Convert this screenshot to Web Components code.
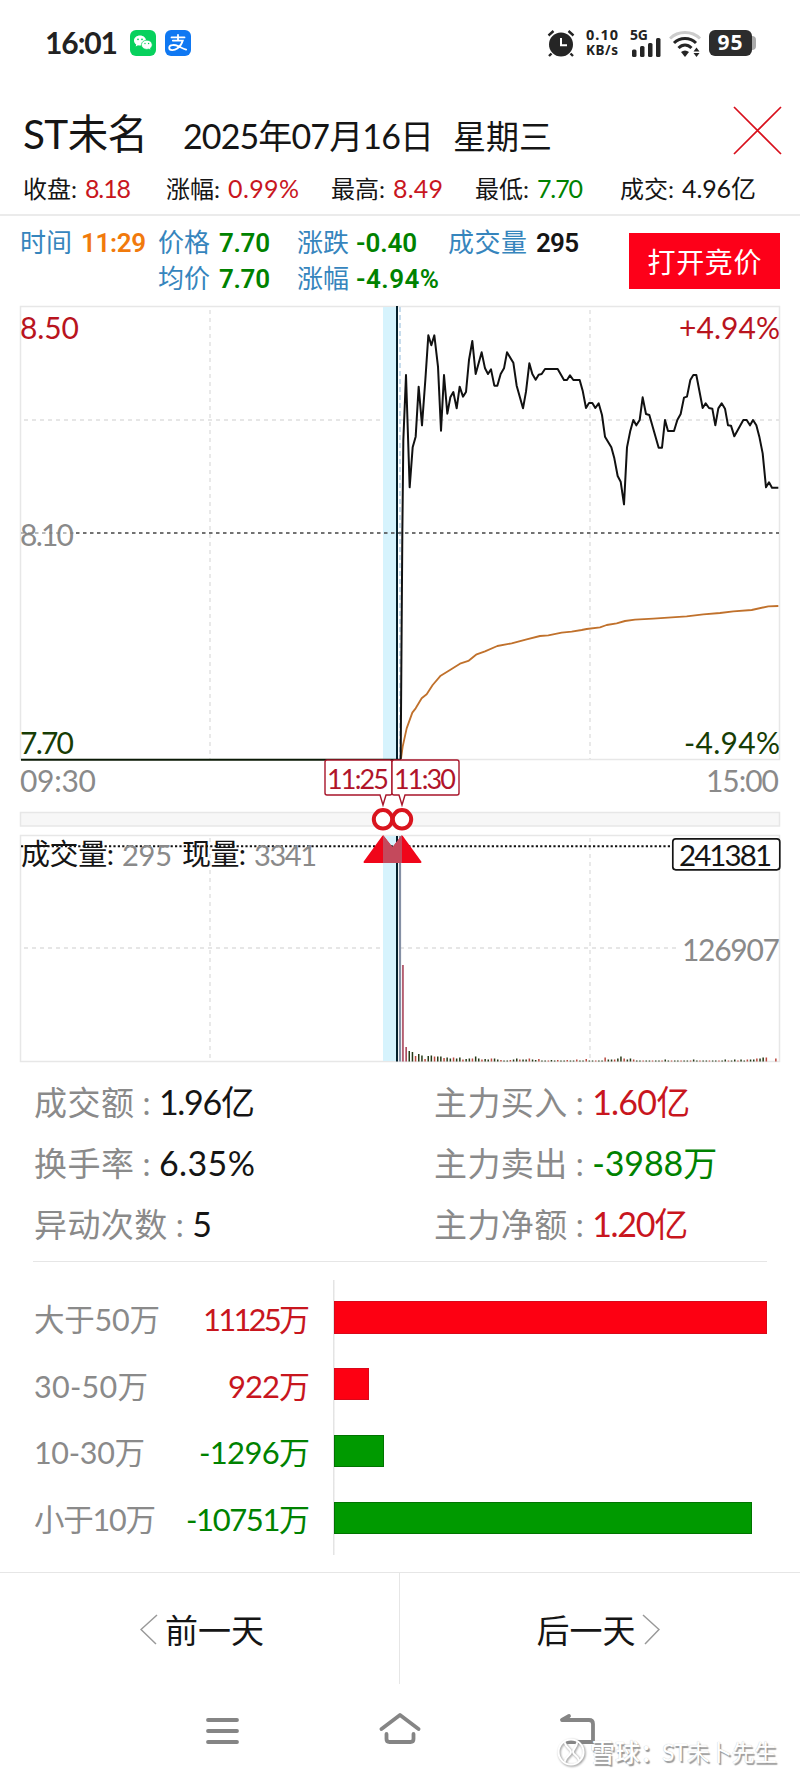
<!DOCTYPE html>
<html lang="zh-CN">
<head>
<meta charset="utf-8">
<meta name="viewport" content="width=800">
<title>ST未名</title>
<style>
  html, body { margin: 0; background: #fff; }
  body {
    width: 800px; height: 1778px; overflow: hidden; color: #151515;
    font-family: Lato, "Noto Sans CJK SC", sans-serif;
    --red: #c8161e; --green: #008200; --grey: #8a8a8a; --line: #e6e6e6;
  }
</style>
</head>
<body>
<stock-app></stock-app>
<script>
const define = (name, html, ready) => customElements.define(name, class extends HTMLElement {
  constructor() {
    super();
    this.attachShadow({ mode: "open" });
  }
  connectedCallback() {
    this.shadowRoot.innerHTML = typeof html === "function" ? html(this) : html;
    if (ready) ready(this);
  }
});

// text run tracked out to an exact width: <fit-text w="127" s="37">
define("fit-text", el => `
  <style>
    :host { display: block; flex: none; line-height: 1; width: ${el.getAttribute("w")}px; font-size: ${el.getAttribute("s")}px; }
    span { display: block; width: max-content; white-space: pre; }
  </style><span><slot></slot></span>`, el => {
  const span = el.shadowRoot.querySelector("span");
  const n = [...el.textContent].length - 1;
  if (n > 0) span.style.letterSpacing = (el.getAttribute("w") - span.getBoundingClientRect().width) / n + "px";
});

define("status-bar", `
  <style>
    :host { display: flex; height: 80px; box-sizing: border-box; padding: 30px 44px 0 45px; align-items: flex-start; color: #222; font-weight: 700; }
    svg { display: block; flex: none; }
    .space { flex: 1; }
    .speed { margin: -3px 12px 0 11px; display: grid; gap: 2px; font-family: "Noto Sans", sans-serif; }
    .speed fit-text { line-height: 14px; }
    .cell { margin-right: 7px; display: grid; }
    .battery { display: flex; align-items: center; }
    .body { width: 43px; height: 26px; border-radius: 6px; background: #2c2c2c; color: #fff; display: grid; place-content: center; box-sizing: border-box; padding-right: 1px; }
    .tip { width: 4px; height: 14px; border-radius: 0 4px 4px 0; background: #aaa; }
  </style>
  <fit-text w="73" s="30" style="margin-top:-3px">16:01</fit-text>
  <svg width="26" height="26" viewBox="0 0 26 26" style="margin-left:12px">
    <rect width="26" height="26" rx="6" fill="#07d15d"/>
    <path d="M10 5.5c-3.4 0-6 2.200-6 5 0 1.600.8 3 2.200 3.900L5.700 16.500l2.300-1.200c3 .8 8-.7 8-4.800 0-2.800-2.600-5-6-5z" fill="#fff"/>
    <path d="M16.800 10.200c-3 0-5.400 2-5.400 4.600s2.400 4.600 5.400 4.600c.7 0 1.400-.1 2-.3l2 1-.5-1.800c1.200-.8 1.900-2 1.900-3.500 0-2.600-2.400-4.600-5.400-4.600z" fill="#fff" stroke="#07d15d" stroke-width=".7"/>
    <g fill="#07d15d"><circle cx="8" cy="9.300" r=".9"/><circle cx="12" cy="9.300" r=".9"/><circle cx="15" cy="13.500" r=".7"/><circle cx="18.600" cy="13.500" r=".7"/></g>
  </svg>
  <svg width="26" height="26" viewBox="0 0 26 26" style="margin-left:9px">
    <rect width="26" height="26" rx="6" fill="#0f78f2"/>
    <g fill="none" stroke="#fff" stroke-width="1.800" stroke-linecap="round">
      <path d="M13 4.800v5.400M6.500 7.400h13M7.800 10.600h10c-.8 3-2.800 6-5.600 8-2.800 2-8 2.400-8-.9 0-3.400 5.600-3.200 9-1.600 3 1.400 5 2.600 8 3.500"/>
    </g>
  </svg>
  <div class="space"></div>
  <svg width="28" height="28" viewBox="0 0 28 28">
    <circle cx="14" cy="14.500" r="12" fill="#252525"/>
    <path d="M14 8v7.200h6" fill="none" stroke="#fff" stroke-width="2"/>
    <path d="M1.500 5.500l5-4.500M21.500 1l5 4.500M4.500 23.500L2 26M23.500 23.500L26 26" stroke="#252525" stroke-width="2.400"/>
  </svg>
  <div class="speed"><fit-text w="32" s="14.500">0.10</fit-text><fit-text w="32" s="13.500">KB/s</fit-text></div>
  <div class="cell">
    <fit-text w="18" s="14" style="font-family:'Noto Sans',sans-serif;height:10px;margin-top:-2px">5G</fit-text>
    <svg width="32" height="19" viewBox="0 0 32 19" fill="#252525">
      <rect x="2" y="11.500" width="4.500" height="7.500" rx="1.500"/><rect x="10" y="8" width="4.500" height="11" rx="1.500"/><rect x="18" y="5" width="4.500" height="14" rx="1.500"/><rect x="26" y="0" width="4.500" height="19" rx="1.500"/>
    </svg>
  </div>
  <svg width="33" height="28" viewBox="0 0 33 28" fill="none" stroke-width="3">
    <path d="M1 8.500C9 .5 23 .5 31 8.500" stroke="#ccc"/>
    <path d="M5 13c6-6 16-6 22 0M9.500 18c4-4 9-4 13 0" stroke="#252525"/>
    <path d="M12 22c2.500-2 5.500-2 8 0l-4 5z" fill="#252525"/>
    <path d="M24.500 21.500l3-4 3 4zM24.500 23l3 4 3-4z" fill="#252525"/>
  </svg>
  <div class="battery" style="margin-left:7px"><div class="body"><fit-text w="25" s="21" style="font-family:'Noto Sans',sans-serif;margin-top:-1px">95</fit-text></div><div class="tip"></div></div>
`);

define("stock-header", `
  <style>
    :host { display: block; height: 136px; box-sizing: border-box; border-bottom: 2px solid #ebebeb; padding: 27px 18px 0 23px; }
    .title, .quotes { display: flex; align-items: baseline; }
    .title { height: 69px; padding-top: 7px; box-sizing: border-box; }
    svg { align-self: flex-start; margin: -8px 0 0 auto; }
    .quotes fit-text:nth-child(even) { margin-left: 8px; }
    .up { color: var(--red); } .down { color: var(--green); }
  </style>
  <div class="title">
    <fit-text w="125" s="40.500">ST未名</fit-text>
    <fit-text w="251" s="34" style="margin-left:35px">2025年07月16日</fit-text>
    <fit-text w="99" s="33" style="margin-left:19px">星期三</fit-text>
    <svg width="49" height="49" viewBox="0 0 49 49" stroke="#d8101c" stroke-width="1.700"><path d="M1 1l47 47M48 1L1 48"/></svg>
  </div>
  <div class="quotes">
    <fit-text w="54" s="24">收盘:</fit-text><fit-text class="up" w="46" s="25">8.18</fit-text>
    <fit-text w="54" s="24" style="margin-left:35px">涨幅:</fit-text><fit-text class="up" w="71" s="25">0.99%</fit-text>
    <fit-text w="54" s="24" style="margin-left:32px">最高:</fit-text><fit-text class="up" w="50" s="25">8.49</fit-text>
    <fit-text w="54" s="24" style="margin-left:32px">最低:</fit-text><fit-text class="down" w="46" s="25">7.70</fit-text>
    <fit-text w="54" s="24" style="margin-left:37px">成交:</fit-text><fit-text w="74" s="25">4.96亿</fit-text>
  </div>
`);

define("cursor-info", `
  <style>
    :host { display: flex; height: 84px; padding: 13px 20px 0 20px; box-sizing: border-box; justify-content: space-between; }
    .grid { display: grid; grid-template-columns: 138px 139px 151px auto; grid-auto-rows: 35.5px; }
    .cell { display: flex; align-items: baseline; gap: 9px; color: #3685bd; }
    b { font: 600 26px Roboto, sans-serif; color: var(--green); display: block; }
    button { all: unset; width: 151px; height: 56px; margin-top: 4px; padding-top: 1px; box-sizing: border-box; background: #fd0019; color: #fff; display: grid; place-content: center; }
  </style>
  <div class="grid">
    <div class="cell"><fit-text w="52" s="26">时间</fit-text><b style="color:#f17a0c"><fit-text w="65" s="26">11:29</fit-text></b></div>
    <div class="cell"><fit-text w="52" s="26">价格</fit-text><b><fit-text w="51" s="26">7.70</fit-text></b></div>
    <div class="cell" style="gap:7px"><fit-text w="52" s="26">涨跌</fit-text><b><fit-text w="61" s="26">-0.40</fit-text></b></div>
    <div class="cell"><fit-text w="79" s="26">成交量</fit-text><b style="color:#151515"><fit-text w="43" s="26">295</fit-text></b></div>
    <div class="cell" style="grid-column:2"><fit-text w="52" s="26">均价</fit-text><b><fit-text w="51" s="26">7.70</fit-text></b></div>
    <div class="cell" style="gap:7px"><fit-text w="52" s="26">涨幅</fit-text><b><fit-text w="83" s="26">-4.94%</fit-text></b></div>
  </div>
  <button><fit-text w="114" s="28">打开竞价</fit-text></button>
`);

// intraday points, in thirds of a pixel from (370, 300)
const PRICE = "92,1378 97,700 100,420 108,225 119,562 128,442 137,410 146,260 156,376 166,240 175,106 184,136 193,106 204,200 213,392 222,225 232,341 241,292 250,276 260,325 269,260 279,290 288,276 297,180 307,123 317,222 335,157 345,205 354,222 363,208 373,257 382,257 392,222 402,205 411,157 430,188 440,257 459,325 468,275 478,190 487,222 497,239 506,224 515,222 525,207 563,207 582,240 591,240 600,226 610,240 629,240 638,272 648,324 657,309 667,309 676,324 686,310 696,345 705,410 714,425 724,442 733,475 743,528 752,545 762,613 771,442 781,392 790,360 799,376 809,360 818,292 828,342 838,345 866,443 876,443 885,360 894,393 912,393 922,360 932,342 942,293 951,290 961,240 970,225 979,225 998,324 1007,310 1017,324 1027,326 1036,376 1045,325 1055,310 1065,326 1074,376 1083,377 1093,409 1120,360 1130,360 1140,376 1149,360 1159,376 1168,410 1178,460 1188,562 1197,547 1206,563 1225,563";
const AVERAGE = "93,1376 98,1340 110,1285 127,1238 137,1225 155,1195 170,1183 188,1155 212,1127 240,1110 270,1091 295,1083 320,1063 345,1054 382,1038 425,1030 470,1018 510,1008 535,1006 575,998 605,995 635,990 650,987 690,982 710,975 740,970 765,963 795,959 850,956 905,952 950,949 1000,943 1050,939 1090,934 1145,930 1195,919 1225,918";
// per-minute volume heights after the reopening
const VOLUME = [96.5, 14.5, 10.5, 9.5, 5.5, 7.5, 6, 2.5, 5.5, 6, 5, 5, 5, 3.5, 4, 3, 4, 3, 4, 2, 2.5, 3, 3, 5, 3, 2, 2.5, 2, 3, 3, 2, 1.5, 1, 1, 1.5, 2, 3, 2, 2, 2, 3, 2, 1.5, 2.5, 1, 1, 1, 1.5, 1, 1.5, 1, 1, 1.5, 1, 1, 2, 1, 1, 2.5, 1, 1, 1, 1, 1, 4, 2, 2, 2, 3, 5, 3, 2, 3, 2, 1, 1, 1, 1, 1, 1, 1, 1, 1, 2, 1, 1, 1, 1, 1, 1, 1, 1, 2, 1, 1, 1, 1, 1, 1, 1, 1, 1, 2, 1, 1, 2, 1, 2, 1, 2, 2, 2, 3, 3, 4, 4, 0, 0, 3];
const volumeBars = () => VOLUME.map((h, i) =>
  `<rect x="${(402.2 + i * 3.16).toFixed(1)}" y="${1061.5 - h}" width="1.500" height="${h}" fill="${i < 2 ? "#a33a50" : i % 3 === 1 || i === 4 ? "#b9483e" : "#263a16"}"/>`).join("");
const text = (x, y, w, s, fill, str) =>
  `<text x="${x}" y="${y}" font-size="${s}" fill="${fill}" textLength="${w}">${str}</text>`;

define("minute-chart", () => `
  <style>
    :host { display: block; height: 770px; }
    svg { display: block; }
  </style>
  <svg width="800" height="770" viewBox="0 300 800 770">
    <g fill="none" stroke="#e7e7e7" stroke-width="1.500">
      <rect x="20.500" y="306.500" width="759" height="453"/>
      <rect x="20.500" y="812.500" width="759" height="13.500" fill="#f7f7f7"/>
      <rect x="20.500" y="835.500" width="759" height="226"/>
    </g>
    <g stroke="#dedede" stroke-width="1.300" stroke-dasharray="4 4">
      <path d="M210 310v449M590 310v449M210 838v223M590 838v223M24 420h755M24 948h655"/>
    </g>
    <path d="M383 307h14v453h-14zM383 836h14v225h-14z" fill="#d6f3fd"/>
    <path d="M400 307v453" stroke="#c7dcec" stroke-width="2" stroke-dasharray="5 3"/>
    <path d="M76 533h703" stroke="#444" stroke-width="1.500" stroke-dasharray="3.500 3.500"/>
    ${text(20, 338.5, 59, 30, "#b9141e", "8.50")}
    ${text(679, 338.5, 101, 30, "#b9141e", "+4.94%")}
    ${text(20, 545.5, 54, 30, "#8a8a8a", "8.10")}
    <path d="M21 533h55" stroke="#777" stroke-width="1.200" stroke-dasharray="3.500 3.500"/>
    ${text(20, 753.5, 54, 30, "#173d05", "7.70")}
    ${text(684, 753.5, 96, 30, "#173d05", "-4.94%")}
    ${text(20, 791.5, 76, 30, "#8a8a8a", "09:30")}
    ${text(706, 791.5, 73, 30, "#8a8a8a", "15:00")}
    <g transform="translate(370 300) scale(.33333)" fill="none" stroke-linejoin="round">
      <polyline points="${AVERAGE}" stroke="#c0712c" stroke-width="5.500"/>
      <polyline points="${PRICE}" stroke="#111" stroke-width="6"/>
    </g>
    <path d="M21 759.800h380" stroke="#0b1a06" stroke-width="2"/>
    <path d="M397 306v454M397 836v225.500" stroke="#04202c" stroke-width="2"/>
    <path d="M400 836v225.500" stroke="#8590a5" stroke-width="2.200"/>
    <path d="M21 846.200h650" stroke="#111" stroke-width="2" stroke-dasharray="2.200 2.200"/>
    ${volumeBars()}
    ${text(21, 865, 93, 29, "#151515", "成交量:")}
    ${text(122, 865.5, 50, 29, "#8a8a8a", "295")}
    ${text(182, 865, 64, 29, "#151515", "现量:")}
    ${text(254, 865.5, 63, 29, "#8a8a8a", "3341")}
    <g stroke="#a8152a" stroke-width="1.400" fill="#fff">
      <path d="M327 760h63q2 0 2 2v31q0 2-2 2h-4l-3 10-3-10h-53q-2 0-2-2v-31q0-2 2-2z"/>
      <path d="M394 760h63q2 0 2 2v31q0 2-2 2h-52l-3 10-3-10h-5q-2 0-2-2v-31q0-2 2-2z"/>
    </g>
    ${text(327, 788.5, 62, 27, "#b0142a", "11:25")}
    ${text(394, 788.5, 62, 27, "#b0142a", "11:30")}
    <g fill="#fff" stroke="#d9141e" stroke-width="4"><circle cx="383" cy="819.300" r="9.200"/><circle cx="402" cy="819.300" r="9.200"/></g>
    <g fill="#f0061a" stroke="#f0061a" stroke-width="2" stroke-linejoin="round"><path d="M383 836.500l19.500 25.500h-38zM402 836.500l-19.500 25.500h38z"/></g>
    <path d="M383 835l9.500 12 9.500-12v28h-19z" fill="#c4495c"/>
    <rect x="672.800" y="838.800" width="107" height="31" rx="3" fill="#fff" stroke="#151515" stroke-width="1.700"/>
    ${text(679, 866, 93, 29.5, "#151515", "241381")}
    ${text(682, 960.5, 98, 30, "#8a8a8a", "126907")}
  </svg>
`);

define("stat-item", el => `
  <style>
    :host { display: flex; align-items: baseline; height: 60.800px; }
    fit-text:first-of-type { color: var(--grey); }
    .colon { color: var(--grey); width: 25px; text-align: center; font-size: 32px; line-height: 1; }
    .val { color: var(--${el.getAttribute("tone") || "ink"}); }
  </style>
  <fit-text w="${33.3 * el.getAttribute("label").length}" s="33">${el.getAttribute("label")}</fit-text>
  <span class="colon">:</span>
  <fit-text class="val" w="${el.getAttribute("w")}" s="34">${el.getAttribute("value")}</fit-text>
`);

define("trade-stats", `
  <style>
    :host { display: grid; grid-template-columns: 400px auto; grid-auto-rows: 60.800px; height: 192px; margin: 0 33px; padding: 15px 0 0 1px; box-sizing: border-box; border-bottom: 1.500px solid var(--line); --ink: #151515; }
  </style>
  <stat-item label="成交额" value="1.96亿" w="96"></stat-item>
  <stat-item label="主力买入" value="1.60亿" w="98" tone="red"></stat-item>
  <stat-item label="换手率" value="6.35%" w="96"></stat-item>
  <stat-item label="主力卖出" value="-3988万" w="125" tone="green"></stat-item>
  <stat-item label="异动次数" value="5" w="20"></stat-item>
  <stat-item label="主力净额" value="1.20亿" w="96" tone="red"></stat-item>
`);

define("flow-row", el => `
  <style>
    :host { display: grid; grid-template-columns: 300px auto; height: 66.800px; align-items: center; color: var(--${el.getAttribute("tone")}); }
    .names { display: flex; justify-content: space-between; padding-right: 24px; margin-top: 4px; }
    .names fit-text:first-child { color: var(--grey); }
    .bar { height: 32.500px; width: ${el.getAttribute("bar")}px; box-sizing: border-box; }
    .red { background: #fd0012; border: 1px solid #d9081a; } .green { background: #009a00; border: 1px solid #007400; }
  </style>
  <div class="names"><fit-text w="${el.getAttribute("lw")}" s="30.500">${el.getAttribute("label")}</fit-text><fit-text w="${el.getAttribute("vw")}" s="31">${el.getAttribute("value")}</fit-text></div>
  <div class="bar ${el.getAttribute("tone")}"></div>
`);

define("flow-chart", `
  <style>
    :host { display: block; height: 310px; box-sizing: border-box; padding: 18px 0 0 34px; }
    .axis { height: 275px; box-sizing: border-box; padding-top: 4px; background: linear-gradient(#e4e4e4, #e4e4e4) 299px 0 / 1.500px 100% no-repeat; }
  </style>
  <div class="axis">
    <flow-row label="大于50万" lw="126" value="11125万" vw="107" bar="433" tone="red"></flow-row>
    <flow-row label="30-50万" lw="114" value="922万" vw="82" bar="35" tone="red"></flow-row>
    <flow-row label="10-30万" lw="111" value="-1296万" vw="111" bar="50" tone="green"></flow-row>
    <flow-row label="小于10万" lw="122" value="-10751万" vw="124" bar="418" tone="green"></flow-row>
  </div>
`);

define("day-pager", `
  <style>
    :host { display: grid; grid-template-columns: 1fr 1fr; height: 112px; border-top: 1.500px solid var(--line); box-sizing: border-box; }
    div { display: flex; align-items: center; justify-content: center; gap: 7px; }
    div:first-of-type { border-right: 1.500px solid var(--line); padding-left: 5px; }
    div:last-of-type { padding-right: 4px; gap: 6px; }
    fit-text { margin-top: 3px; }
    svg { margin-top: 1px; }
  </style>
  <div><svg width="18" height="31" fill="none" stroke="#999" stroke-width="1.500"><path d="M17 1L1 15.500 16 30"/></svg><fit-text w="99" s="33">前一天</fit-text></div>
  <div><fit-text w="99" s="33">后一天</fit-text><svg width="18" height="31" fill="none" stroke="#999" stroke-width="1.500"><path d="M1 1l16 14.500L3 30"/></svg></div>
`);

define("system-nav", `
  <style>
    :host { display: flex; height: 94px; padding: 28px 204px 0; box-sizing: border-box; justify-content: space-between; align-items: flex-start; }
    svg { fill: none; stroke: #858585; stroke-width: 3.800; stroke-linecap: round; stroke-linejoin: round; }
    .mark { position: absolute; left: 557px; top: 1737px; display: flex; align-items: center; color: #fff; text-shadow: 1.500px 1.500px 1px #999, 0 0 1px #bbb; }
    .mark svg { stroke: #fff; stroke-width: 2; filter: drop-shadow(1px 1px .8px #888); }
  </style>
  <svg width="37" height="36"><path d="M4 8h29M4 19h29M4 30h29"/></svg>
  <svg width="42" height="36"><path d="M2.500 17L21 3l18.500 14M7.500 22v5q0 3 3 3h21q3 0 3-3v-5"/></svg>
  <svg width="37" height="36"><path d="M10 4L3 8h27q4 0 4 4v18H8"/></svg>
  <div class="mark">
    <svg width="30" height="30"><circle cx="14" cy="15" r="12.500"/><path d="M8 6c1 5 6 6 6 9s-5 4-6 9M20 6c-1 5-4 6-4 9s5 4 6 8"/></svg>
    <fit-text w="75" s="25" style="margin-left:3px;font-weight:500">雪球：</fit-text>
    <fit-text w="115" s="23" style="margin-left:-3px">ST未卜先生</fit-text>
  </div>
`);

define("stock-app", `
  <style>:host { display: block; position: relative; width: 800px; height: 1778px; }</style>
  <status-bar></status-bar>
  <stock-header></stock-header>
  <cursor-info></cursor-info>
  <minute-chart></minute-chart>
  <trade-stats></trade-stats>
  <flow-chart></flow-chart>
  <day-pager></day-pager>
  <system-nav></system-nav>
`);
</script>
</body>
</html>
